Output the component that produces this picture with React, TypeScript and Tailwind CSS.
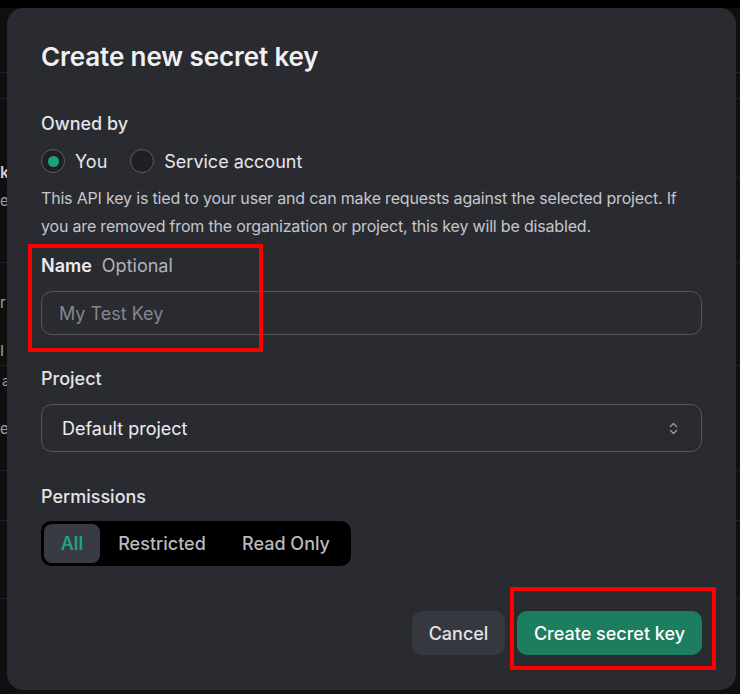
import { ChevronsUpDown } from 'lucide-react';

const BG_ROWS = [72, 98, 177, 262, 365, 470, 520, 598];

function Radio({ checked, label }: { checked: boolean; label: string }) {
  return (
    <label className="flex items-center gap-[10px]">
      <span className="flex h-[24px] w-[24px] items-center justify-center rounded-full border-[1.5px] border-[#5d5e64] bg-[#1f2024]">
        {checked && <span className="h-[11px] w-[11px] rounded-full bg-[#19a37a]" />}
      </span>
      <span className="text-[18px] text-[#e6e6ea]">{label}</span>
    </label>
  );
}

export default function App() {
  return (
    <div
      className="relative h-[694px] w-[740px] overflow-hidden bg-[#0f0f10]"
      style={{ fontFamily: 'Inter, "Liberation Sans", sans-serif' }}
    >
      {/* page behind the dialog */}
      <div className="h-[8px] bg-black" />
      {BG_ROWS.map((y) => (
        <div key={y} className="absolute left-0 right-0 h-px bg-[#222226]" style={{ top: y }} />
      ))}
      <div className="absolute left-0 top-[160px] w-[7px] overflow-hidden text-[16px] font-semibold text-[#d0d0d4]">k</div>
      <div className="absolute left-0 top-[190px] w-[7px] overflow-hidden text-[15px] text-[#a0a0a6]">e</div>
      <div className="absolute left-0 top-[292px] w-[7px] overflow-hidden text-[15px] text-[#a0a0a6]">r</div>
      <div className="absolute left-0 top-[340px] w-[7px] overflow-hidden text-[15px] text-[#a0a0a6]">I</div>
      <div className="absolute left-[2px] top-[370px] w-[5px] overflow-hidden text-[14px] text-[#a0a0a6]">a</div>
      <div className="absolute left-0 top-[418px] w-[7px] overflow-hidden text-[15px] text-[#a0a0a6]">e</div>

      {/* dialog */}
      <div className="absolute left-[7px] top-[8px] flex h-[682px] w-[729px] flex-col rounded-[16px] bg-[#2a2b30] px-[34px] pt-[33px]">
        <h1 className="text-[26px] font-semibold leading-[32px] tracking-[-0.1px] text-[#f1f1f4]">
          Create new secret key
        </h1>

        <div className="mt-[39px] text-[18px] font-medium leading-[24px] text-[#e3e3e7]">Owned by</div>
        <div className="mt-[13px] flex h-[24px] items-center gap-[23px]">
          <Radio checked label="You" />
          <Radio checked={false} label="Service account" />
        </div>
        <p className="mt-[11px] text-[16px] leading-[28px] tracking-[-0.18px] text-[#c6c6cc]">
          This API key is tied to your user and can make requests against the selected project. If you are
          removed from the organization or project, this key will be disabled.
        </p>

        <div className="mt-[14px] flex items-baseline gap-[10px] text-[18px] leading-[24px]">
          <span className="font-semibold text-[#ececf0]">Name</span>
          <span className="text-[#b2b2b8]">Optional</span>
        </div>
        <div className="mt-[13px] flex h-[44px] items-center rounded-[11px] border border-[#55565c] px-[17px]">
          <span className="text-[18px] text-[#85868d]">My Test Key</span>
        </div>

        <div className="mt-[32px] text-[18px] font-medium leading-[24px] text-[#e3e3e7]">Project</div>
        <div className="mt-[13px] flex h-[48px] items-center justify-between rounded-[11px] border border-[#55565c] pl-[20px] pr-[20px]">
          <span className="text-[18px] text-[#ececf0]">Default project</span>
          <ChevronsUpDown size={15} strokeWidth={2} className="text-[#a3a3aa]" />
        </div>

        <div className="mt-[33px] text-[18px] font-medium leading-[24px] text-[#e3e3e7]">Permissions</div>
        <div className="mt-[12px] flex h-[45px] w-[310px] items-center rounded-[10px] bg-black p-[3px]">
          <div className="flex h-full w-[56px] items-center justify-center rounded-[8px] bg-[#383b43] text-[18px] font-semibold text-[#1fa57a]">
            All
          </div>
          <div className="flex h-full flex-1 items-center justify-center text-[18px] font-medium text-[#b9b9bf]">
            Restricted
          </div>
          <div className="flex h-full flex-1 items-center justify-center text-[18px] font-medium text-[#b9b9bf]">
            Read Only
          </div>
        </div>

        <div className="mt-[45px] flex justify-end gap-[12px]">
          <button className="h-[44px] w-[93px] rounded-[10px] bg-[#363840] text-[18px] font-medium text-[#e3e3e7]">
            Cancel
          </button>
          <button className="h-[44px] w-[185px] rounded-[10px] bg-[#1c7e5e] text-[18px] font-medium text-white">
            Create secret key
          </button>
        </div>
      </div>

      {/* annotation boxes */}
      <div className="absolute left-[28px] top-[244px] h-[108px] w-[235px] border-[4px] border-[#ff0000]" />
      <div className="absolute left-[510px] top-[587px] h-[83px] w-[206px] border-[4px] border-[#ff0000]" />
    </div>
  );
}
